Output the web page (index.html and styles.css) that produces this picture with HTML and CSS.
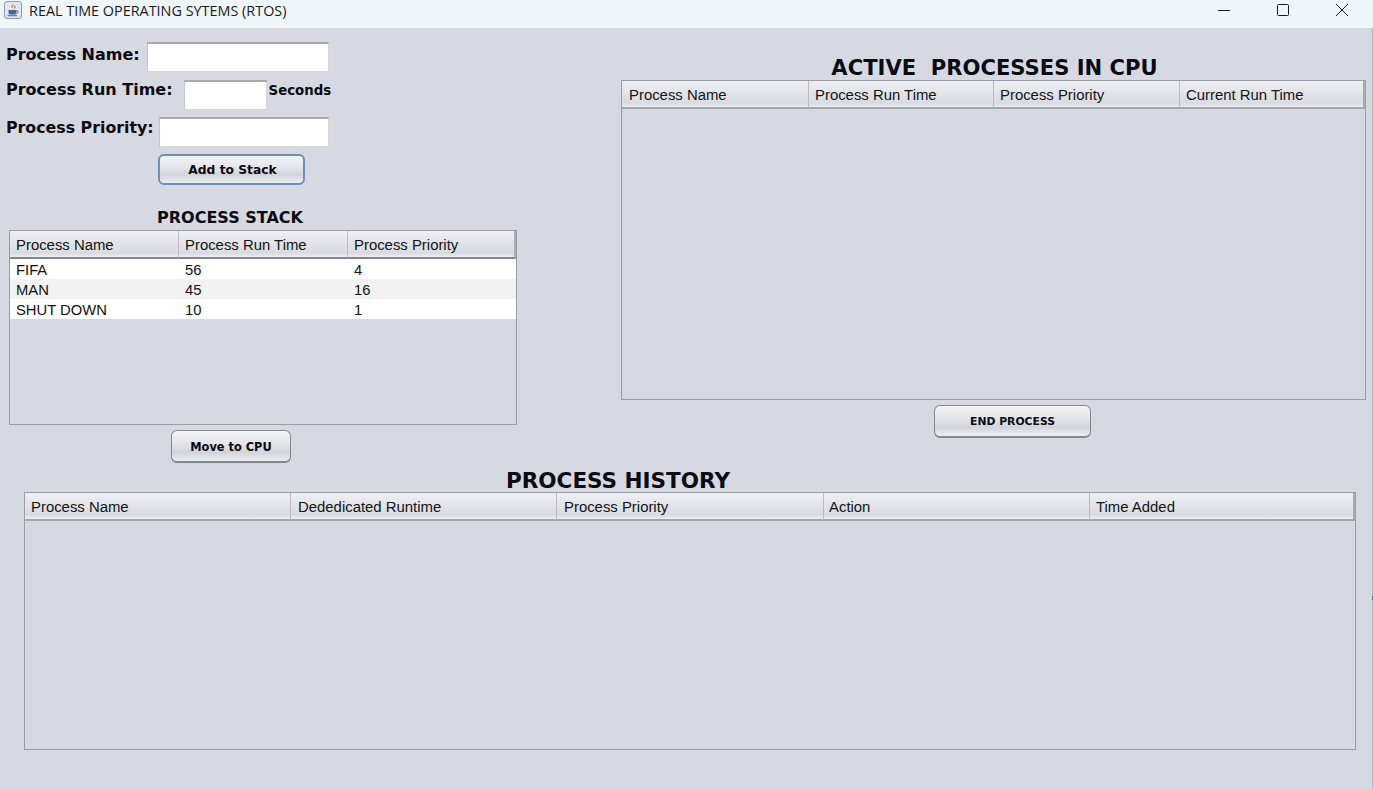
FILE: index.html
```html
<!DOCTYPE html>
<html lang="en">
<head>
  <meta charset="UTF-8">
  <meta name="viewport" content="width=device-width, initial-scale=1.0">
  <title>REAL TIME OPERATING SYTEMS (RTOS)</title>
  <link rel="stylesheet" href="styles.css">
</head>
<body>

<div id="titlebar">
  <svg class="app-icon" width="20" height="20" viewBox="0 0 20 20">
    <rect x="1.5" y="1.5" width="17" height="17" rx="2.5" fill="#dfe6f0" stroke="#8b9bb2"/>
    <path d="M10.5 3.5c1 1.6-1.6 2.6-.9 4.2.2.5.5.8.8 1.1-1.9-1-2.6-2-1.9-3 .6-.8 1.7-1.2 2-2.3z" fill="#e2731c"/>
    <path d="M12.3 5.6c-1 .7-1.6 1.3-1 2.3.2.4.2.7 0 1 1.500-.7 1.700-2.100 1-3.300z" fill="#e2731c"/>
    <path d="M5.500 10h7.800v2.800c0 1.100-.9 1.800-1.900 1.800H7.400c-1 0-1.900-.7-1.900-1.800z" fill="#44678f"/>
    <path d="M13.300 10.700h.9c1.500 0 1.500 2.300-.9 2.500" fill="none" stroke="#44678f"/>
    <path d="M4.500 15.700h9.500" stroke="#44678f"/>
  </svg>
  <span class="app-title">REAL TIME OPERATING SYTEMS (RTOS)</span>
  <div class="window-buttons">
    <svg width="14" height="14" viewBox="0 0 14 14"><path d="M1 7.500h12" stroke="#1a1a1a" fill="none"/></svg>
    <svg width="14" height="14" viewBox="0 0 14 14"><rect x="1.500" y="1.500" width="11" height="11" rx="1" stroke="#1a1a1a" fill="none"/></svg>
    <svg width="14" height="14" viewBox="0 0 14 14"><path d="M1 1l12 12M13 1L1 13" stroke="#1a1a1a" fill="none"/></svg>
  </div>
</div>

<div id="content">
  <div class="top">
    <div class="left">
      <div class="form-row row-name">
        <label class="field-label" for="processName">Process Name:</label>
        <input type="text" id="processName" class="field name-field">
      </div>
      <div class="form-row row-time">
        <label class="field-label" for="runTime">Process Run Time:</label>
        <input type="text" id="runTime" class="field time-field">
        <span class="unit">Seconds</span>
      </div>
      <div class="form-row row-priority">
        <label class="field-label" for="priority">Process Priority:</label>
        <input type="text" id="priority" class="field priority-field">
      </div>
      <button class="btn btn-add">Add to Stack</button>

      <h2 class="stack-title">PROCESS STACK</h2>
      <div class="table-box stack-box">
        <table>
          <colgroup>
            <col class="stack-col"><col class="stack-col"><col>
          </colgroup>
          <thead>
            <tr><th>Process Name</th><th>Process Run Time</th><th>Process Priority</th></tr>
          </thead>
          <tbody>
            <tr><td>FIFA</td><td>56</td><td>4</td></tr>
            <tr class="alt"><td>MAN</td><td>45</td><td>16</td></tr>
            <tr><td>SHUT DOWN</td><td>10</td><td>1</td></tr>
          </tbody>
        </table>
      </div>
      <button class="btn btn-move">Move to CPU</button>
    </div>

    <div class="right">
      <h1 class="big-title active-title">ACTIVE&nbsp; PROCESSES IN CPU</h1>
      <div class="table-box active-box">
        <table>
          <colgroup>
            <col class="active-col-1"><col class="active-col-2"><col class="active-col-3"><col>
          </colgroup>
          <thead>
            <tr><th>Process Name</th><th>Process Run Time</th><th>Process Priority</th><th>Current Run Time</th></tr>
          </thead>
        </table>
      </div>
      <button class="btn btn-end">END PROCESS</button>
    </div>
  </div>

  <div class="history">
    <h1 class="big-title history-title">PROCESS HISTORY</h1>
    <div class="table-box history-box">
      <table>
        <colgroup>
          <col class="history-col"><col class="history-col"><col class="history-col-wide"><col class="history-col"><col>
        </colgroup>
        <thead>
          <tr><th>Process Name</th><th>Dededicated Runtime</th><th>Process Priority</th><th>Action</th><th>Time Added</th></tr>
        </thead>
      </table>
    </div>
  </div>

  <span class="edge-mark"></span>
</div>

</body>
</html>
```

FILE: styles.css
```css
* {
  box-sizing: border-box;
}

html, body {
  height: 100%;
}

body {
  margin: 0;
  display: flex;
  flex-direction: column;
  overflow: hidden;
  font-family: "Liberation Sans", Arial, sans-serif;
  background-color: #d6d9e2;
  color: #111;
}

/* window title bar */
#titlebar {
  flex: 0 0 28px;
  display: flex;
  align-items: center;
  padding: 0 0 8px 3px;
  height: 28px;
  background-color: #eff6fa;
}

.app-icon {
  flex: none;
}

.app-title {
  margin-left: 6px;
  font-family: "Open Sans", sans-serif;
  font-size: 14.4px;
  color: #1a1a1a;
}

.window-buttons {
  margin-left: auto;
  display: flex;
  gap: 45px;
  padding-right: 24px;
}

/* main panel */
#content {
  position: relative;
  flex: 1;
  border-right: 1px solid #b4b7be;
}

.top {
  display: flex;
  height: 441px;
}

.left {
  width: 621px;
  padding-top: 14px;
}

.right {
  width: 745px;
}

.form-row {
  display: flex;
  align-items: flex-start;
  padding-left: 6px;
}

.field-label, .unit, .stack-title, .big-title, .btn {
  font-family: "DejaVu Sans", Verdana, sans-serif;
  font-weight: bold;
  color: #0b0b12;
}

.field-label {
  font-size: 16px;
  line-height: 18px;
  padding-top: 4px;
  white-space: nowrap;
}

.field {
  height: 30px;
  padding: 0;
  background-color: #fff;
  border: 1px solid #d4d5d8;
  border-top: 2px solid #a9aaad;
  border-left-color: #c4c5c8;
  outline: none;
}

.row-name {
  height: 38px;
}

.name-field {
  width: 182px;
  margin-left: 7px;
}

.row-time {
  height: 37px;
}

.time-field {
  width: 83px;
  margin-left: 11px;
}

.row-time .field-label {
  padding-top: 1px;
}

.unit {
  margin-left: 2px;
  font-size: 13.3px;
  line-height: 22px;
}

.row-priority {
  height: 37px;
}

.row-priority .field-label {
  padding-top: 2px;
  width: 147px;
  font-size: 15.8px;
}

.priority-field {
  width: 170px;
  margin-left: 6px;
}

.btn {
  display: block;
  padding: 0;
  border: 1px solid #85878d;
  border-bottom-width: 2px;
  border-radius: 6px;
  background: linear-gradient(#f3f4f7 0%, #e3e4ea 45%, #d2d4dc 70%, #eceef3 100%);
}

.btn-add {
  width: 147px;
  height: 31px;
  margin-left: 158px;
  padding-left: 2px;
  font-size: 12.3px;
  border: 2px solid #6f8fb4;
}

.stack-title {
  margin: 23px 0 0 0;
  width: 460px;
  font-size: 16px;
  line-height: 20px;
  text-align: center;
}

.big-title {
  margin: 0;
  font-size: 21.5px;
  line-height: 23px;
  text-align: center;
}

.active-title {
  margin-top: 28px;
  padding: 0 0 1px 2px;
  font-size: 21.1px;
}

.table-box {
  background-color: #d6d9e2;
  border: 1px solid #9b9da5;
  overflow: hidden;
}

table {
  width: 100%;
  table-layout: fixed;
  border-collapse: separate;
  border-spacing: 0;
}

th {
  height: 28px;
  padding: 1px 0 0 6px;
  font-size: 14.9px;
  font-weight: normal;
  text-align: left;
  color: #141414;
  border-right: 1px solid #b9bbc3;
  border-bottom: 2px solid #a3a5ad;
  background: linear-gradient(#eeeff3 0%, #e2e3e9 50%, #d9dbe2 85%, #eceef2 100%);
}

th:last-child {
  border-right: 2px solid #a9abb3;
}

td {
  height: 20px;
  padding: 1px 0 0 6px;
  font-size: 14.8px;
  color: #111;
  background-color: #fff;
}

.alt td {
  background-color: #f2f2f2;
}

.stack-box {
  width: 508px;
  height: 195px;
  margin: 2px 0 0 9px;
}

.stack-box th {
  border-bottom-color: #85878f;
}

.stack-col {
  width: 169px;
}

.btn-move {
  width: 120px;
  height: 33px;
  margin: 5px 0 0 171px;
  padding-top: 1px;
  font-size: 11.4px;
}

.active-box {
  width: 745px;
  height: 320px;
}

.active-box th:first-child {
  padding-left: 7px;
}

.active-col-1 {
  width: 187px;
}

.active-col-2 {
  width: 185px;
}

.active-col-3 {
  width: 186px;
}

.btn-end {
  width: 157px;
  height: 33px;
  margin: 5px 0 0 313px;
  padding-top: 1px;
  font-size: 10.8px;
}

.history {
  padding-left: 24px;
}

.history-title {
  width: 1188px;
}

.history-box {
  width: 1332px;
  height: 258px;
}

.history-col {
  width: 266px;
}

.history-col-wide {
  width: 267px;
}

.history-box th:nth-child(2), .history-box th:nth-child(3) {
  padding-left: 7px;
}

.history-box th:nth-child(4) {
  padding-left: 5px;
}

/* small blue tick on the window edge */
.edge-mark {
  position: absolute;
  right: -1px;
  top: 568px;
  width: 1px;
  height: 4px;
  background-color: #4d7aa5;
}
```
